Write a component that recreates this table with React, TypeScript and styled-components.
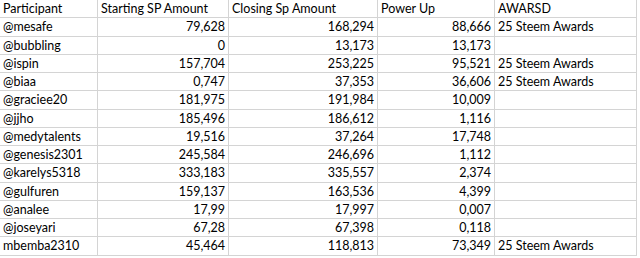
import React from 'react';
import styled, { createGlobalStyle } from 'styled-components';

const GlobalStyle = createGlobalStyle`
  html, body {
    margin: 0;
    padding: 0;
    background: #ffffff;
  }
`;

const Sheet = styled.div`
  display: grid;
  grid-template-columns: 98px 131px 149px 117px 142px;
  grid-auto-rows: 18.25px;
  width: 637px;
  font-family: Lato, 'Liberation Sans', sans-serif;
  font-size: 12.5px;
  color: #000;
`;

const Cell = styled.div<{ $align?: 'left' | 'right' }>`
  box-sizing: border-box;
  display: flex;
  align-items: center;
  justify-content: ${(p) => (p.$align === 'right' ? 'flex-end' : 'flex-start')};
  padding: 0 3px;
  border-right: 1px solid #d4d4d4;
  border-bottom: 1px solid #d4d4d4;
  white-space: nowrap;
  overflow: hidden;
`;

const headers = ['Participant', 'Starting SP Amount', 'Closing Sp Amount', 'Power Up', 'AWARSD'];

const rows: [string, string, string, string, string][] = [
  ['@mesafe', '79,628', '168,294', '88,666', '25 Steem Awards'],
  ['@bubbling', '0', '13,173', '13,173', ''],
  ['@ispin', '157,704', '253,225', '95,521', '25 Steem Awards'],
  ['@biaa', '0,747', '37,353', '36,606', '25 Steem Awards'],
  ['@graciee20', '181,975', '191,984', '10,009', ''],
  ['@jjho', '185,496', '186,612', '1,116', ''],
  ['@medytalents', '19,516', '37,264', '17,748', ''],
  ['@genesis2301', '245,584', '246,696', '1,112', ''],
  ['@karelys5318', '333,183', '335,557', '2,374', ''],
  ['@gulfuren', '159,137', '163,536', '4,399', ''],
  ['@analee', '17,99', '17,997', '0,007', ''],
  ['@joseyari', '67,28', '67,398', '0,118', ''],
  ['mbemba2310', '45,464', '118,813', '73,349', '25 Steem Awards'],
];

const App = () => {
  return (
    <>
      <GlobalStyle />
      <Sheet>
        {headers.map((h) => (
          <Cell key={h}>{h}</Cell>
        ))}
        {rows.map((row, r) =>
          row.map((value, c) => (
            <Cell key={`${r}-${c}`} $align={c >= 1 && c <= 3 ? 'right' : 'left'}>
              {value}
            </Cell>
          ))
        )}
      </Sheet>
    </>
  );
};

export default App;
